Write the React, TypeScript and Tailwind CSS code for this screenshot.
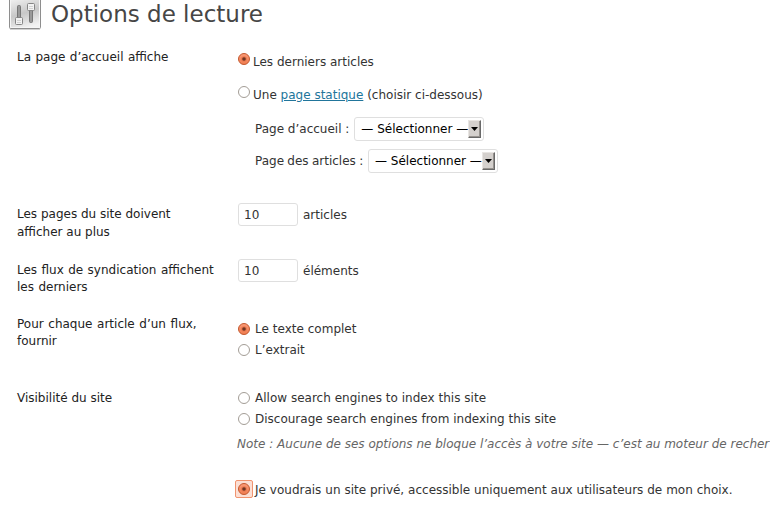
import type { ReactNode } from 'react'

function SettingsIcon() {
  return (
    <svg className="block h-8 w-[34px] shrink-0" viewBox="0 0 34 32">
      <defs>
        <linearGradient id="plate" x1="0.2" y1="0" x2="0.5" y2="1">
          <stop offset="0" stopColor="#f4f4f4" />
          <stop offset="0.55" stopColor="#c8c8c8" />
          <stop offset="1" stopColor="#f2f2f2" />
        </linearGradient>
      </defs>
      <path d="M2 29.5h30" stroke="#d2d2d2" />
      <rect x="1.5" y="-3.5" width="31" height="32" rx="1" fill="url(#plate)" stroke="#8e8e8e" />
      <path d="M2.5 0v27.5h29V0" fill="none" stroke="#f5f5f5" />
      <rect x="9.5" y="5.5" width="3" height="14" rx="1" fill="#999" stroke="#777" />
      <rect x="21.5" y="8.5" width="3" height="14" rx="1" fill="#999" stroke="#777" />
      <rect x="7.5" y="17.5" width="7" height="7" rx="1" fill="#f2f2f2" stroke="#858585" />
      <path d="M9 20.5h4M9 22.5h4" stroke="#d2d2d2" />
      <rect x="19.5" y="3.5" width="7" height="7" rx="1" fill="#f2f2f2" stroke="#858585" />
      <path d="M21 6.5h4M21 8.5h4" stroke="#d2d2d2" />
    </svg>
  )
}

function Radio({ checked = false, focused = false }: { checked?: boolean; focused?: boolean }) {
  return (
    <svg className="block size-[18px] shrink-0" viewBox="0 0 18 18">
      <defs>
        <linearGradient id="dot" x1="0" y1="0" x2="0" y2="1">
          <stop offset="0" stopColor="#fa9a78" />
          <stop offset="1" stopColor="#f07d50" />
        </linearGradient>
      </defs>
      {focused && <rect x="0.5" y="0.5" width="17" height="17" rx="1.5" fill="#fcdfd4" stroke="#f0946f" />}
      <circle cx="9" cy="9" r="5.5" fill={checked ? 'url(#dot)' : '#fff'} stroke={checked ? '#c4592f' : '#a39d96'} />
      {checked && <circle cx="9" cy="9" r="2.8" fill="#e8794f" />}
      {checked && <circle cx="9" cy="9" r="1.8" fill="#6f3524" />}
    </svg>
  )
}

function Row({
  label,
  labelClass = 'leading-[17px]',
  className,
  children,
}: {
  label: string
  labelClass?: string
  className: string
  children: ReactNode
}) {
  return (
    <div className={`flex ${className}`}>
      <div className={`w-[218px] shrink-0 whitespace-pre text-[#222] ${labelClass}`}>{label}</div>
      <div className="min-w-0 flex-1">{children}</div>
    </div>
  )
}

function SelectBox() {
  return (
    <span className="flex h-6 w-[130px] items-center rounded-[3px] border border-[#dfdfdf] pl-1.5 pr-0.5 text-black">
      <span className="w-[107px]">— Sélectionner —</span>
      <span className="flex h-[18px] w-[13px] items-center justify-center border border-t-[#e8e5e2] border-r-[#696969] border-b-[#696969] border-l-[#e8e5e2] bg-[#d4d0cd] shadow-[inset_-1px_-1px_0_#96928e]">
        <svg className="block h-1 w-[7px]" viewBox="0 0 7 4">
          <path d="M0 0h7L3.5 4z" fill="#000" />
        </svg>
      </span>
    </span>
  )
}

function NumberField({ value, unit }: { value: string; unit: string }) {
  return (
    <div className="-mt-[3px] flex items-center pl-[3px]">
      <input
        readOnly
        value={value}
        className="mr-[5px] h-[23px] w-[60px] rounded-[3px] border border-[#dfdfdf] bg-white px-[5px] text-[#333] outline-none"
      />
      {unit}
    </div>
  )
}

function Option({ children, checked }: { children: string; checked?: boolean }) {
  return (
    <label className="flex h-[21px] items-center gap-0.5 [word-spacing:0.1px]">
      <Radio checked={checked} />
      {children}
    </label>
  )
}

export default function App() {
  return (
    <main className="h-[518px] w-[770px] overflow-hidden whitespace-nowrap bg-white font-['DejaVu_Sans',sans-serif] text-[12px] text-[#333]">
      <header className="flex h-[49px] items-start gap-[9px] pl-2">
        <SettingsIcon />
        <h1 className="text-[23px] leading-[28px] text-[#464646]">Options de lecture</h1>
      </header>
      <div className="pl-[17px]">
        <Row label="La page d’accueil affiche" labelClass="leading-[17px] [word-spacing:0.6px]" className="h-[157px]">
          <label className="flex h-[22px] items-start pt-px">
            <Radio checked />
            <span className="pt-[3px] leading-[18px]">Les derniers articles</span>
          </label>
          <div className="mt-[11px] flex h-[22px] items-start pt-px">
            <Radio />
            <span className="pt-[3px] leading-[18px]">
              Une <a className="text-[#21759b] underline">page statique</a> (choisir ci-dessous)
            </span>
          </div>
          <div className="mt-[13px] flex h-6 items-center gap-[5px] pl-5">Page d’accueil : <SelectBox /></div>
          <div className="mt-2 flex h-6 items-center pl-5">
            <span className="w-[113px] [word-spacing:-0.5px]">Page des articles :</span>
            <SelectBox />
          </div>
        </Row>
        <Row label={'Les pages du site doivent\nafficher au plus'} labelClass="-mt-px leading-[18px]" className="h-[56px]">
          <NumberField value="10" unit="articles" />
        </Row>
        <Row
          label={'Les flux de syndication affichent\nles derniers'}
          labelClass="leading-[17px] [word-spacing:0.6px]"
          className="h-[54px]"
        >
          <NumberField value="10" unit="éléments" />
        </Row>
        <Row
          label={'Pour chaque article d’un flux,\nfournir'}
          labelClass="leading-[17px] [word-spacing:0.8px]"
          className="h-[74px]"
        >
          <div className="pt-0.5">
            <Option checked>Le texte complet</Option>
            <Option>L’extrait</Option>
          </div>
        </Row>
        <Row label="Visibilité du site" className="">
          <div className="-mt-[3px]">
            <Option>Allow search engines to index this site</Option>
            <Option>Discourage search engines from indexing this site</Option>
          </div>
          <p className="mt-1.5 pl-0.5 leading-[18px] text-[#666] italic">
            Note : Aucune de ses options ne bloque l’accès à votre site — c’est au moteur de recher
          </p>
          <label className="mt-[26px] flex items-center gap-0.5 [word-spacing:0.1px]">
            <Radio checked focused />
            <span className="pt-0.5 leading-[18px]">
              Je voudrais un site privé, accessible uniquement aux utilisateurs de mon choix.
            </span>
          </label>
        </Row>
      </div>
    </main>
  )
}
